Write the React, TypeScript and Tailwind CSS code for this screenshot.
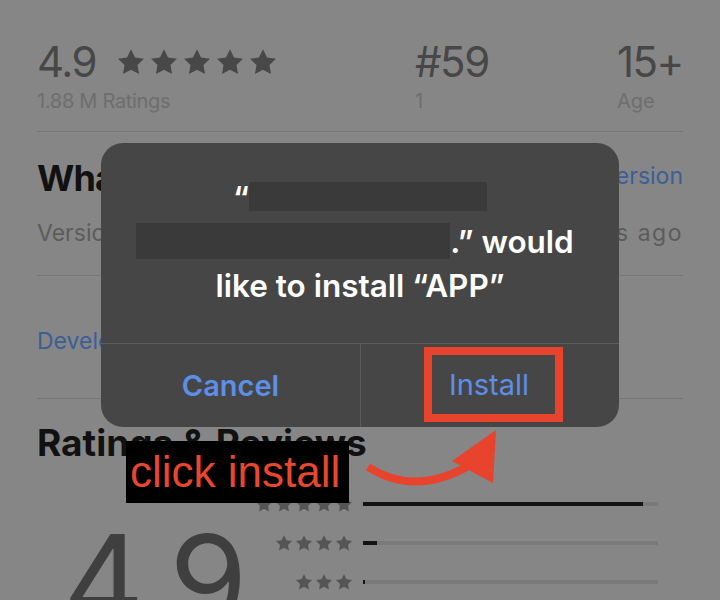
import React from 'react';

const Star = ({ size, color }: { size: number; color: string }) => (
  <svg width={size} height={size} viewBox="2 2 20 19.5" fill={color}>
    <path d="M12 2l3.09 6.26L22 9.27l-5 4.87 1.18 6.88L12 17.77l-6.18 3.25L7 14.14 2 9.27l6.91-1.01L12 2z" />
  </svg>
);

const bars = [
  { stars: 5, fill: 280 },
  { stars: 4, fill: 14 },
  { stars: 3, fill: 2 },
];

export default function App() {
  return (
    <div className="relative w-[720px] h-[600px] overflow-hidden bg-[#868686] font-['Inter',sans-serif]">
      <div className="px-[37px]">
        {/* stats */}
        <div className="h-[132px] border-b border-[#767676] flex pt-[41px]">
          <div className="w-[378px]">
            <div className="flex items-center">
              <span className="text-[42px] leading-none text-[#474747] tracking-[-1.5px]">4.9</span>
              <div className="flex gap-[7px] ml-[22px]">
                {[0, 1, 2, 3, 4].map((i) => (
                  <Star key={i} size={26} color="#484848" />
                ))}
              </div>
            </div>
            <div className="mt-[8px] text-[20px] leading-none text-[#6e6e6e] tracking-[-0.3px]">1.88 M Ratings</div>
          </div>
          <div className="w-[202px]">
            <div className="text-[42px] leading-none text-[#474747] tracking-[-1.5px]">#59</div>
            <div className="mt-[8px] text-[20px] leading-none text-[#6e6e6e]">1</div>
          </div>
          <div>
            <div className="text-[42px] leading-none text-[#474747] tracking-[-1.5px]">15+</div>
            <div className="mt-[8px] text-[20px] leading-none text-[#6e6e6e]">Age</div>
          </div>
        </div>

        {/* what's new */}
        <div className="h-[144px] border-b border-[#767676] pt-[24px]">
          <div className="flex items-start justify-between">
            <span className="text-[36px] leading-[44px] font-bold text-[#111111] tracking-tight">What’s New</span>
            <span className="mt-[6px] text-[23px] leading-[28px] text-[#3b5e98]">Previous Version</span>
          </div>
          <div className="flex items-start justify-between mt-[19px]">
            <span className="text-[23px] leading-[28px] text-[#5c5c5c]">Version 5.3.1</span>
            <span className="text-[23px] leading-[28px] text-[#5c5c5c] tracking-[1.5px]">3 days ago</span>
          </div>
        </div>

        {/* developer */}
        <div className="h-[123px] border-b border-[#767676] pt-[51px]">
          <span className="text-[23px] leading-[28px] text-[#3b5e98]">Developer Response</span>
        </div>

        {/* ratings */}
        <div className="pt-[22px]">
          <div className="text-[37px] leading-[44px] font-bold text-[#111111]">Ratings &amp; Reviews</div>
          <div className="flex mt-[10px]">
            <div className="w-[218px] pl-[26px] pt-[42px] text-[126px] leading-none text-[#3f3f3f] tracking-tight">4.9</div>
            <div className="flex flex-col gap-[23px] pt-[21px]">
              {bars.map((b) => (
                <div key={b.stars} className="flex items-center h-[16px]">
                  <div className="w-[97px] flex justify-end gap-[4px]">
                    {Array.from({ length: b.stars }).map((_, i) => (
                      <Star key={i} size={16} color="#555555" />
                    ))}
                  </div>
                  <div className="ml-[11px] w-[295px] h-[4px] bg-[#7a7a7a]">
                    <div className="h-full bg-[#141414]" style={{ width: b.fill }} />
                  </div>
                </div>
              ))}
            </div>
          </div>
        </div>
      </div>

      {/* alert */}
      <div className="absolute left-[101px] top-[143px] w-[518px] h-[284px] rounded-[22px] bg-[#464646] flex flex-col">
        <div className="h-[200px] pt-[33px] flex flex-col items-center text-white text-[31.5px] leading-[44px] font-semibold">
          <div className="flex items-center h-[44px]">
            <span>“</span>
            <span className="inline-block w-[238px] h-[29px] bg-[#3a3a3a] mt-[-4px]" />
          </div>
          <div className="flex items-center h-[44px] ml-[-10px]">
            <span className="inline-block w-[314px] h-[36px] bg-[#3a3a3a] mt-[-2px]" />
            <span>.” would</span>
          </div>
          <div className="h-[44px]">like to install “APP”</div>
        </div>
        <div className="flex flex-1 border-t border-[#5c5c5c]">
          <div className="w-[260px] border-r border-[#5c5c5c] flex items-center justify-center text-[29px] font-semibold text-[#5d8ee8]">
            Cancel
          </div>
          <div className="flex-1 flex items-center justify-center">
            <div className="ml-[6px] mt-[-2px] w-[139px] h-[75px] border-[8px] border-[#e8432c] flex items-center justify-center pr-[8px] text-[29px] text-[#5d8ee8]">
              Install
            </div>
          </div>
        </div>
      </div>

      {/* annotation */}
      <div className="absolute left-[126px] top-[441px] w-[223px] h-[62px] bg-black text-[#e8472f] text-[44px] leading-[62px] pl-[4px] font-['Liberation_Sans',sans-serif]">
        click install
      </div>
      <svg className="absolute left-0 top-0" width="720" height="600">
        <path d="M368 467 Q415 497 470 465" stroke="#e8432c" strokeWidth="8" fill="none" />
        <polygon points="496,430 452,461 493,483" fill="#e8432c" />
      </svg>
    </div>
  );
}
